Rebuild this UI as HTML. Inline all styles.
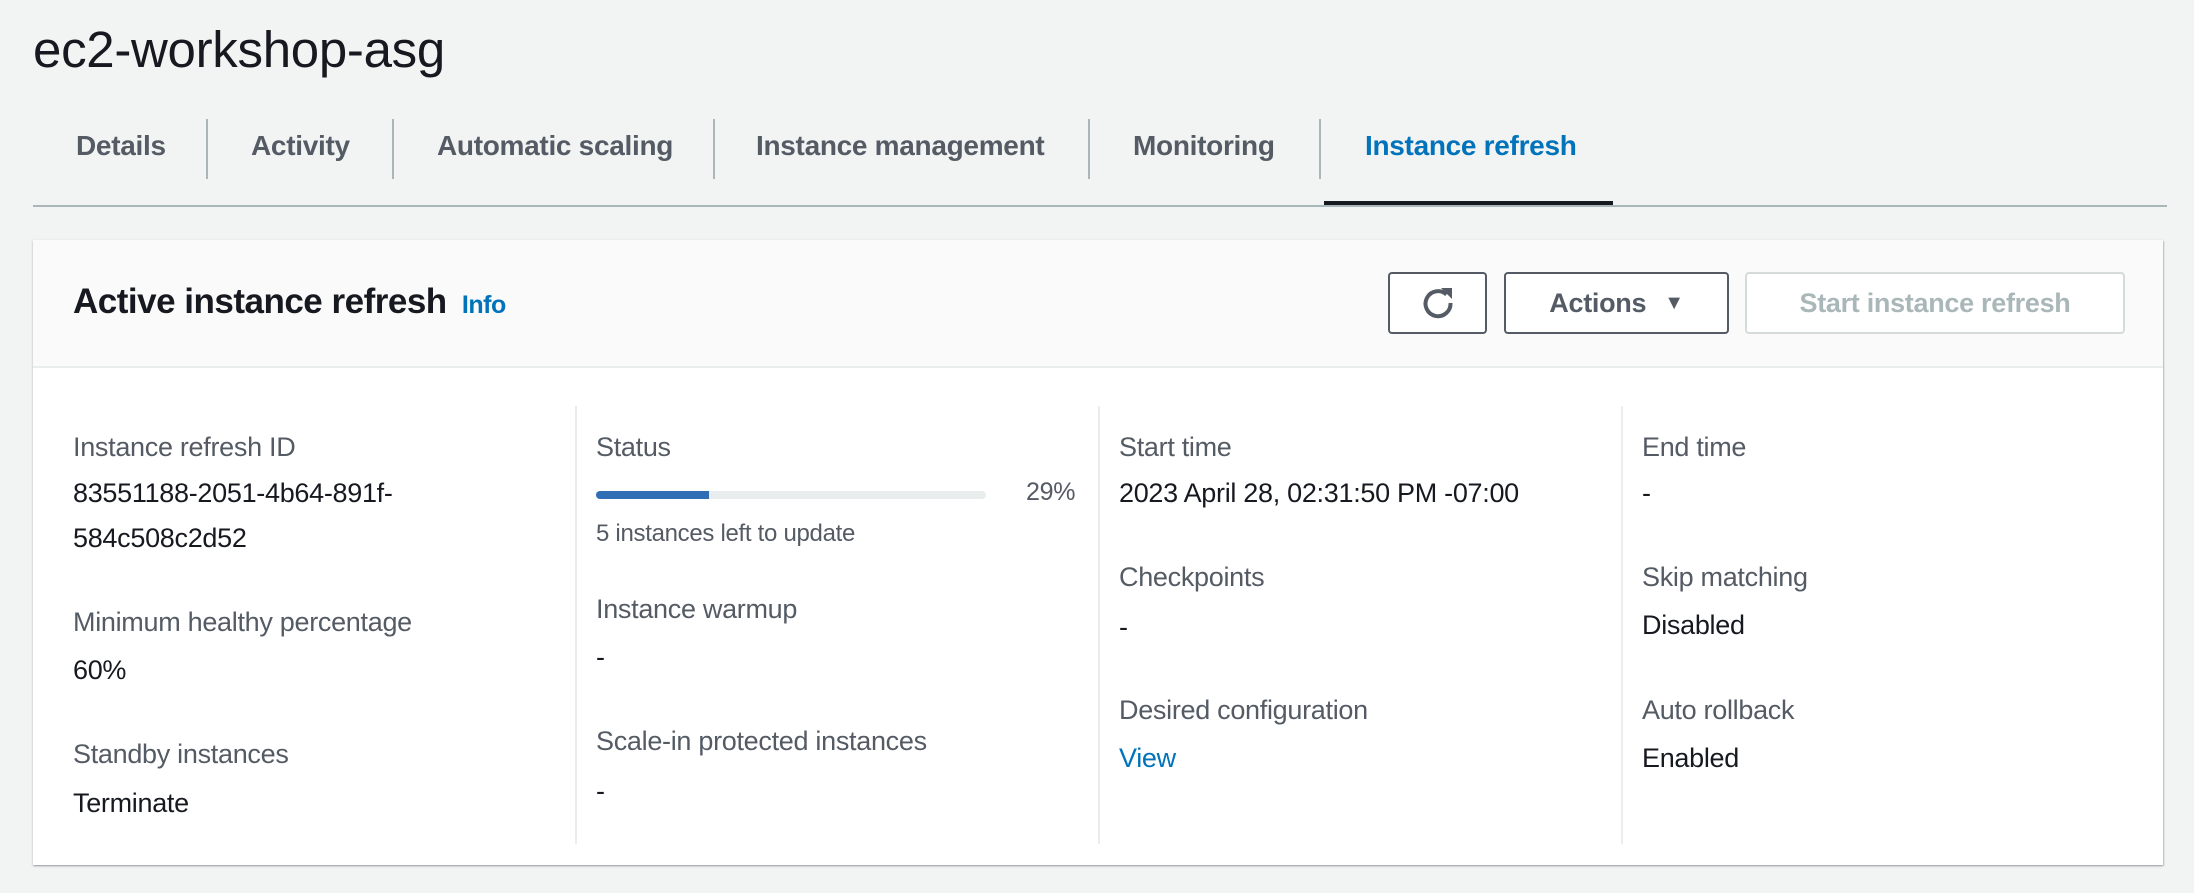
<!DOCTYPE html>
<html><head><meta charset="utf-8"><style>
*{margin:0;padding:0;box-sizing:border-box}
body{width:2194px;height:893px;background:#f2f3f3;font-family:"Liberation Sans",sans-serif;position:relative;overflow:hidden;color:#16191f}
.a{position:absolute;white-space:nowrap}
h1{position:absolute;left:33px;top:20px;font-size:51px;font-weight:400;color:#16191f;letter-spacing:-0.3px}
.tab{position:absolute;top:130px;font-size:28px;font-weight:700;color:#545b64;letter-spacing:-0.3px}
.sep{position:absolute;top:119px;width:2px;height:60px;background:#aab7b8}
.card{position:absolute;left:33px;top:240px;width:2130px;height:625px;background:#fff;box-shadow:0 1px 2px rgba(0,28,36,.3),1px 1px 1px rgba(0,28,36,.15)}
.hdr{position:absolute;left:0;top:0;width:100%;height:128px;background:#fafafa;border-bottom:2px solid #eaeded}
.btn{position:absolute;top:32px;height:62px;border:2px solid #545b64;border-radius:4px;background:#fff;font-size:27px;font-weight:700;color:#545b64;display:flex;align-items:center;justify-content:center;letter-spacing:-0.3px}
.vs{position:absolute;top:166px;width:2px;height:438px;background:#eaeded}
.l{position:absolute;font-size:27px;color:#545b64;white-space:nowrap;letter-spacing:-0.3px}
.v{position:absolute;font-size:27px;color:#16191f;white-space:nowrap;letter-spacing:-0.3px}
</style></head><body>
<h1>ec2-workshop-asg</h1>
<div class="tab" style="left:76px">Details</div>
<div class="sep" style="left:206px"></div>
<div class="tab" style="left:251px">Activity</div>
<div class="sep" style="left:392px"></div>
<div class="tab" style="left:437px">Automatic scaling</div>
<div class="sep" style="left:713px"></div>
<div class="tab" style="left:756px">Instance management</div>
<div class="sep" style="left:1088px"></div>
<div class="tab" style="left:1133px">Monitoring</div>
<div class="sep" style="left:1319px"></div>
<div class="tab" style="left:1365px;color:#0073bb">Instance refresh</div>
<div class="a" style="left:33px;top:205px;width:2134px;height:2px;background:#aab7b8"></div>
<div class="a" style="left:1324px;top:201px;width:289px;height:4px;background:#16191f"></div>
<div class="card">
 <div class="hdr">
  <div class="a" style="left:40px;top:42px;font-size:35px;font-weight:700;letter-spacing:-0.5px">Active instance refresh <span style="font-size:25px;color:#0073bb;margin-left:6px">Info</span></div>
  <div class="btn" style="left:1355px;width:99px"><svg width="36" height="36" viewBox="0 0 36 36"><path d="M26.5 9.5 A12.5 12.5 0 1 0 30.5 18" fill="none" stroke="#545b64" stroke-width="4"/><path d="M21 3 H32 V14 Z" fill="#545b64"/></svg></div>
  <div class="btn" style="left:1471px;width:225px">Actions <span style="font-size:20px;margin-left:18px">▼</span></div>
  <div class="btn" style="left:1712px;width:380px;border-color:#d5dbdb;color:#aab7b8">Start instance refresh</div>
 </div>
 <div class="vs" style="left:542px"></div>
 <div class="vs" style="left:1065px"></div>
 <div class="vs" style="left:1588px"></div>

 <div class="l" style="left:40px;top:192px">Instance refresh ID</div>
 <div class="v" style="left:40px;top:238px">83551188-2051-4b64-891f-</div>
 <div class="v" style="left:40px;top:283px">584c508c2d52</div>
 <div class="l" style="left:40px;top:367px">Minimum healthy percentage</div>
 <div class="v" style="left:40px;top:415px">60%</div>
 <div class="l" style="left:40px;top:499px">Standby instances</div>
 <div class="v" style="left:40px;top:548px">Terminate</div>

 <div class="l" style="left:563px;top:192px">Status</div>
 <div class="a" style="left:563px;top:251px;width:390px;height:8px;border-radius:4px;background:#eaeded"></div>
 <div class="a" style="left:563px;top:251px;width:113px;height:8px;border-radius:4px 0 0 4px;background:#2f6eb5"></div>
 <div class="l" style="left:993px;top:238px;font-size:25px">29%</div>
 <div class="l" style="left:563px;top:280px;font-size:24px">5 instances left to update</div>
 <div class="l" style="left:563px;top:354px">Instance warmup</div>
 <div class="v" style="left:563px;top:402px">-</div>
 <div class="l" style="left:563px;top:486px">Scale-in protected instances</div>
 <div class="v" style="left:563px;top:536px">-</div>

 <div class="l" style="left:1086px;top:192px">Start time</div>
 <div class="v" style="left:1086px;top:238px">2023 April 28, 02:31:50 PM -07:00</div>
 <div class="l" style="left:1086px;top:322px">Checkpoints</div>
 <div class="v" style="left:1086px;top:372px">-</div>
 <div class="l" style="left:1086px;top:455px">Desired configuration</div>
 <div class="v" style="left:1086px;top:503px;color:#0073bb">View</div>

 <div class="l" style="left:1609px;top:192px">End time</div>
 <div class="v" style="left:1609px;top:238px">-</div>
 <div class="l" style="left:1609px;top:322px">Skip matching</div>
 <div class="v" style="left:1609px;top:370px">Disabled</div>
 <div class="l" style="left:1609px;top:455px">Auto rollback</div>
 <div class="v" style="left:1609px;top:503px">Enabled</div>
</div>
</body></html>
